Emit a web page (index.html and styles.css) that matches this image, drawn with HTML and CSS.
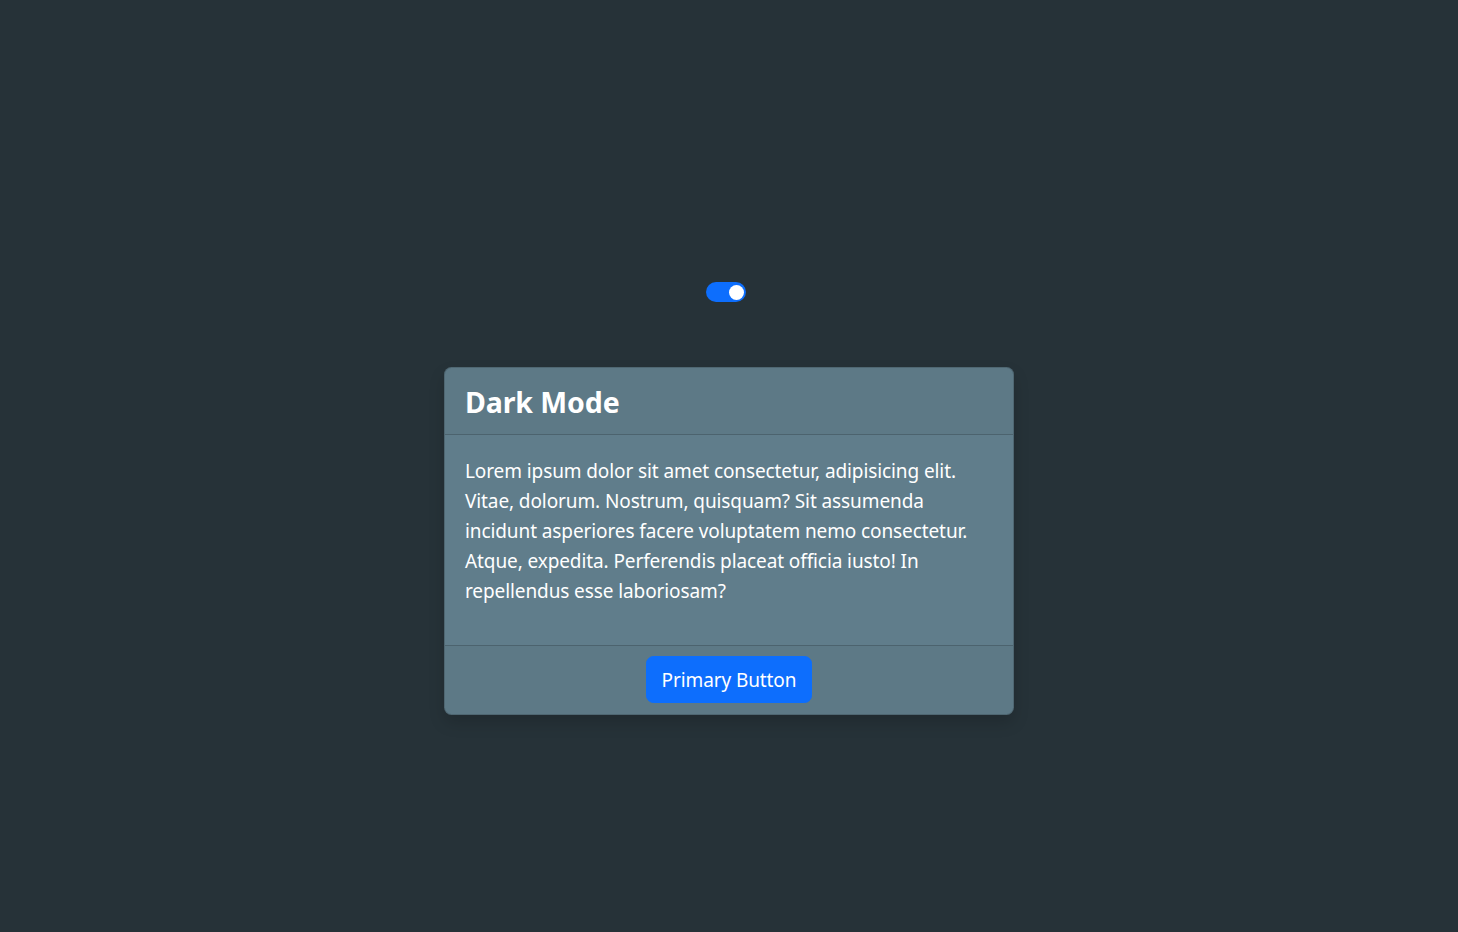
FILE: index.html
```html
<!DOCTYPE html>
<html lang="en">
<head>
<meta charset="utf-8">
<title>Dark Mode</title>
<link rel="stylesheet" href="styles.css">
</head>
<body>
<main class="page">
  <label class="switch">
    <input type="checkbox" class="switch-input" checked>
    <span class="switch-track"><span class="switch-knob"></span></span>
  </label>
  <section class="card">
    <header class="card-header">
      <h2 class="card-title">Dark Mode</h2>
    </header>
    <div class="card-body">
      <p class="card-text">Lorem ipsum dolor sit amet consectetur, adipisicing elit. Vitae, dolorum. Nostrum, quisquam? Sit assumenda incidunt asperiores facere voluptatem nemo consectetur. Atque, expedita. Perferendis placeat officia iusto! In repellendus esse laboriosam?</p>
    </div>
    <footer class="card-footer">
      <button class="btn-primary" type="button">Primary Button</button>
    </footer>
  </section>
</main>
</body>
</html>
```

FILE: styles.css
```css
html, body {
  margin: 0;
  height: 100%;
}

body {
  background: #263238;
  color: #fff;
  font-family: "Segoe UI", "Noto Sans", "Open Sans", sans-serif;
  font-size: 19px;
  letter-spacing: -0.1px;
  line-height: 30px;
}

.page {
  display: flex;
  flex-direction: column;
  align-items: center;
  padding-top: 282px;
  box-sizing: border-box;
}

/* toggle switch */
.switch {
  display: block;
  margin-right: 6px;
  cursor: pointer;
}

.switch-input {
  position: absolute;
  opacity: 0;
  width: 0;
  height: 0;
}

.switch-track {
  display: flex;
  justify-content: flex-end;
  align-items: center;
  width: 40px;
  height: 20px;
  box-sizing: border-box;
  padding: 0 2px;
  border-radius: 10px;
  background: #0d6efd;
}

.switch-knob {
  width: 15px;
  height: 15px;
  border-radius: 50%;
  background: #fff;
}

/* card */
.card {
  margin-top: 65px;
  width: 570px;
  box-sizing: border-box;
  background: #607d8b;
  border: 1px solid rgba(0, 0, 0, 0.175);
  border-radius: 7.5px;
  box-shadow: 0 8px 16px rgba(0, 0, 0, 0.15);
  overflow: hidden;
}

.card-header {
  padding: 16px 20px 0;
  background: rgba(0, 0, 0, 0.03);
  border-bottom: 1px solid rgba(0, 0, 0, 0.175);
}

.card-title {
  margin: 0;
  font-size: 28.5px;
  font-weight: 700;
  letter-spacing: -0.1px;
  line-height: 36px;
  height: 50px;
}

.card-body {
  padding: 21px 20px 19px;
}

.card-text {
  margin: 0 0 20px;
}

.card-footer {
  display: flex;
  justify-content: center;
  padding: 10px 20px 11px;
  background: rgba(0, 0, 0, 0.03);
  border-top: 1px solid rgba(0, 0, 0, 0.175);
}

.btn-primary {
  font: inherit;
  letter-spacing: inherit;
  line-height: 30px;
  color: #fff;
  background: #0d6efd;
  border: 1px solid #0d6efd;
  border-radius: 7.5px;
  padding: 8px 15px 7px;
  cursor: pointer;
}
```
